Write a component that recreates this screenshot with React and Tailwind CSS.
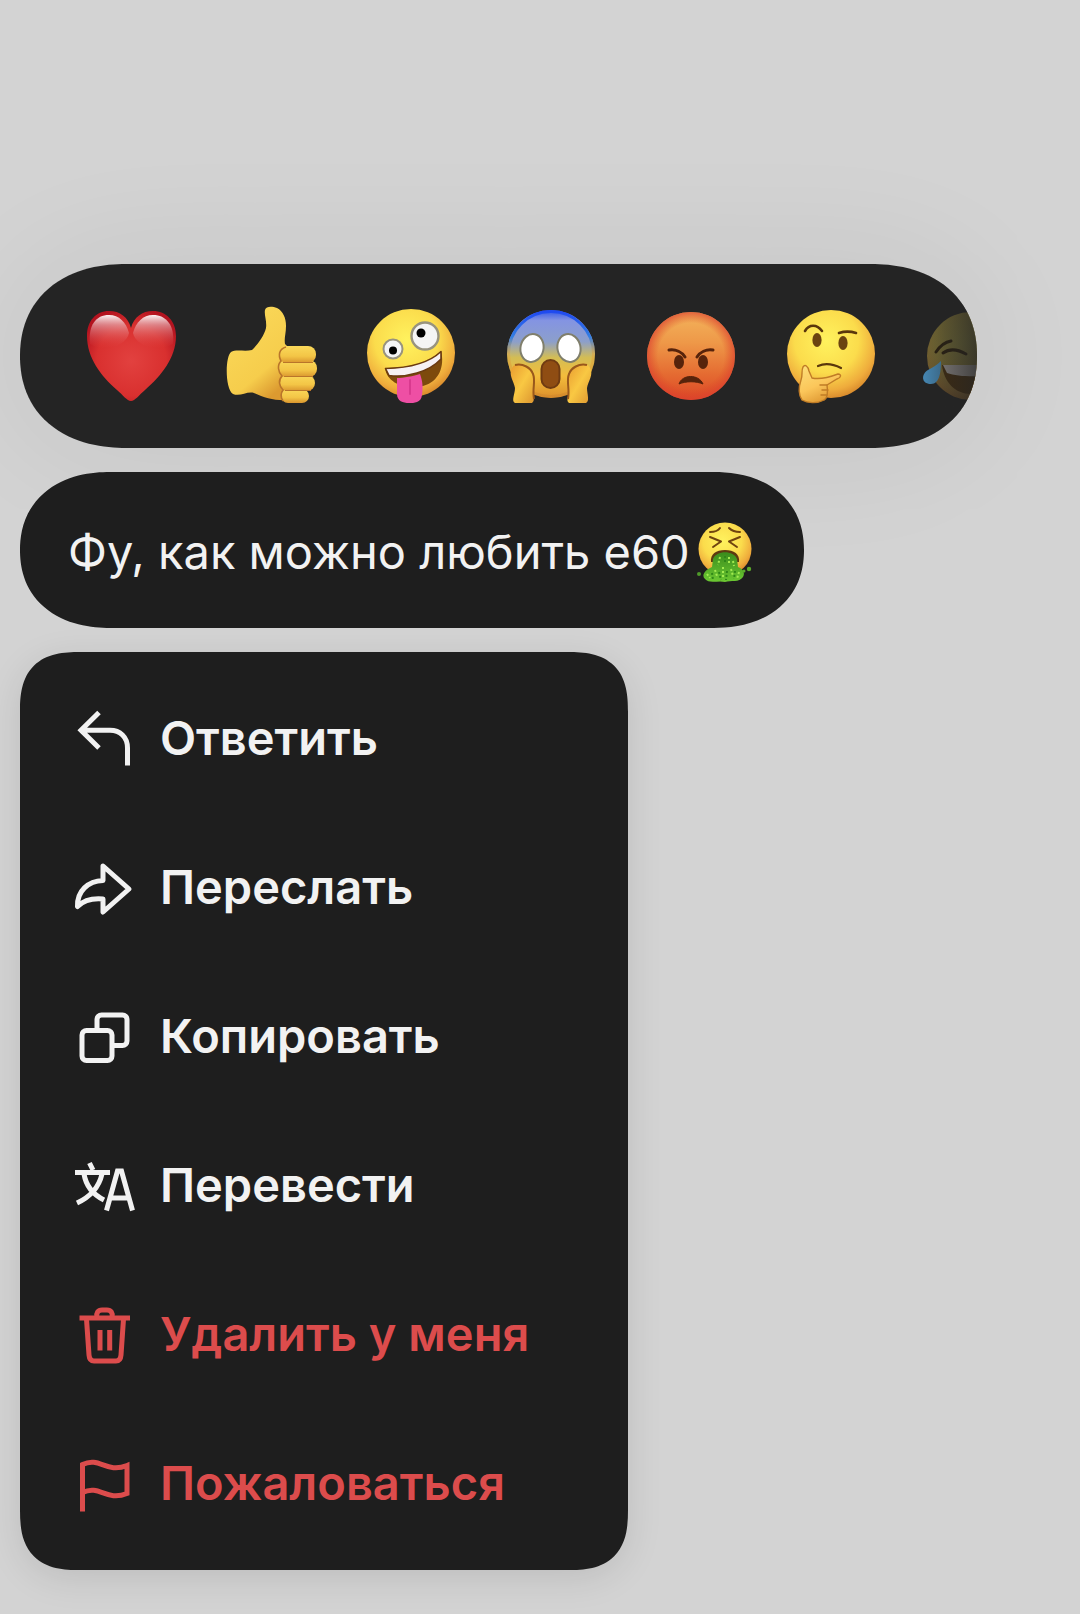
const reactions = [
  { name: "Сердце", Icon: Heart },
  { name: "Нравится", Icon: ThumbsUp },
  { name: "Безумие", Icon: Zany },
  { name: "Ужас", Icon: Scream },
  { name: "Злость", Icon: Angry },
  { name: "Раздумье", Icon: Thinking },
  { name: "Смех", Icon: Joy },
];

const actions = [
  { label: "Ответить", Icon: ReplyIcon },
  { label: "Переслать", Icon: ForwardIcon },
  { label: "Копировать", Icon: CopyIcon },
  { label: "Перевести", Icon: TranslateIcon },
  { label: "Удалить у меня", Icon: TrashIcon, danger: true },
  { label: "Пожаловаться", Icon: FlagIcon, danger: true },
];

export default function App() {
  return (
    <main className="flex min-h-screen flex-col items-start gap-6 bg-[#d3d3d3] px-5 pt-[264px] pb-11 font-['Inter','Noto_Sans',sans-serif]">
      <ReactionBar />

      <p className="flex items-center gap-1.5 rounded-[90px/78px] bg-[#1e1e1e] pt-12 pr-12 pb-11 pl-12 text-[47px] leading-[60px] text-[#f2f2f2] [corner-shape:superellipse(1.15)]">
        Фу, как можно любить е60
        <Vomit />
      </p>

      <menu className="w-full max-w-[608px] rounded-[60px] bg-[#1e1e1e] py-3 shadow-[0_8px_36px_rgba(0,0,0,0.1)] [corner-shape:superellipse(1.4)]">
        {actions.map(({ label, Icon, danger }) => (
          <li key={label} className="list-none">
            <button
              type="button"
              className={`flex h-[149px] w-full items-center gap-6 pl-[52px] text-left text-[47px] font-semibold ${
                danger ? "text-[#dc4c4c]" : "text-[#f2f2f2]"
              }`}>
              <Icon />
              {label}
            </button>
          </li>
        ))}
      </menu>
    </main>
  );
}

function ReactionBar() {
  return (
    <div className="w-full max-w-[957px] rounded-[106px/92px] shadow-[0_0_130px_rgba(0,0,0,0.07)] [corner-shape:superellipse(1.15)]">
      <div className="relative flex overflow-hidden rounded-[106px/92px] bg-[#242424] py-11 pl-[63px] [corner-shape:superellipse(1.15)]">
        {reactions.map(({ name, Icon }) => (
          <button
            key={name}
            type="button"
            aria-label={name}
            className="flex w-[140px] shrink-0">
            <Icon />
          </button>
        ))}
        {/* fade at the scroll edge */}
        <div className="pointer-events-none absolute inset-y-0 right-0 w-16 bg-linear-to-r from-[#242424]/10 via-[#242424]/50 to-[#242424]/80" />
      </div>
    </div>
  );
}

/* ---------- reactions ---------- */

function Emoji({ children }) {
  return (
    <svg viewBox="0 0 96 96" className="size-24 overflow-visible" fill="none" aria-hidden="true">
      {children}
    </svg>
  );
}

// yellow ball shared by most of the faces
function FaceGradient({ id }) {
  return (
    <radialGradient id={id} cx="0.45" cy="0.35" r="0.66">
      <stop offset="0" stopColor="#fff25e" />
      <stop offset="0.55" stopColor="#fbdc4c" />
      <stop offset="0.85" stopColor="#efac3c" />
      <stop offset="1" stopColor="#d98a2c" />
    </radialGradient>
  );
}

function Heart() {
  return (
    <Emoji>
      <defs>
        <radialGradient id="heart" cx="0.5" cy="0.55" r="0.6">
          <stop offset="0" stopColor="#e2413f" />
          <stop offset="0.65" stopColor="#d9302f" />
          <stop offset="1" stopColor="#b3131f" />
        </radialGradient>
        <linearGradient id="heartShine" x1="0" y1="0" x2="0" y2="1">
          <stop offset="0" stopColor="#fff" stopOpacity="0.95" />
          <stop offset="0.3" stopColor="#e9b4b8" stopOpacity="0.65" />
          <stop offset="1" stopColor="#e2413f" stopOpacity="0" />
        </linearGradient>
      </defs>
      <path
        d="M48 93C44 93 40 87 34 82C18 68 4 50 4 28C4 13 13 3 26 3C37 3 45 9 48 20C51 9 59 3 70 3C83 3 93 13 93 28C93 50 78 68 62 82C56 87 52 93 48 93Z"
        fill="url(#heart)"
      />
      <path d="M7 36C5 17 13 7 26 7C36 7 43 14 46 25C44 36 24 46 7 36Z" fill="url(#heartShine)" />
      <path d="M90 36C92 17 83 7 70 7C60 7 53 14 50 25C52 36 72 46 90 36Z" fill="url(#heartShine)" />
    </Emoji>
  );
}

function ThumbsUp() {
  return (
    <Emoji>
      <defs>
        <linearGradient id="thumb" x1="0" y1="0" x2="0.6" y2="1">
          <stop offset="0" stopColor="#fbdb5c" />
          <stop offset="0.75" stopColor="#f6cd4c" />
          <stop offset="1" stopColor="#dc9a30" />
        </linearGradient>
        <linearGradient id="finger" x1="0" y1="0" x2="0" y2="1">
          <stop offset="0" stopColor="#fad95a" />
          <stop offset="0.6" stopColor="#f3c546" />
          <stop offset="1" stopColor="#d9952e" />
        </linearGradient>
      </defs>
      <path
        d="M8 44C13 41 22 44 29 42C35 36 41 28 43 20C44 13 41 7 42 2C43 -2 49 -2 54 0C60 3 63 10 63 18C63 26 61 30 62 36L70 44L66 92C52 93 42 90 31 85C24 83 17 89 10 86C2 81 2 49 8 44Z"
        fill="url(#thumb)"
      />
      <rect x="58" y="81" width="28" height="14" rx="7" fill="url(#finger)" />
      <rect x="57" y="67" width="35" height="16" rx="8" fill="url(#finger)" />
      <rect x="56" y="52" width="38" height="17" rx="8" fill="url(#finger)" />
      <rect x="56" y="38" width="37" height="17" rx="8" fill="url(#finger)" />
      <path
        d="M63 39C56 41 55 47 58 53C54 57 55 64 59 68C55 72 56 78 60 82C57 86 58 90 60 93"
        stroke="#b9752a"
        strokeWidth="1.6"
      />
      <path d="M60 54.500H90M61 68.500H90M62 82.500H88" stroke="#b9752a" strokeWidth="1.2" />
    </Emoji>
  );
}

function Zany() {
  return (
    <Emoji>
      <defs>
        <FaceGradient id="zany" />
      </defs>
      <circle cx="48" cy="45" r="44" fill="url(#zany)" />
      <circle cx="30" cy="41" r="9.500" fill="#f4f4f4" stroke="#98937e" strokeWidth="2" />
      <circle cx="30" cy="42.500" r="4" fill="#000" />
      <circle cx="62" cy="28" r="13.500" fill="#f4f4f4" stroke="#98937e" strokeWidth="2.400" />
      <circle cx="58" cy="25" r="4.500" fill="#000" />
      <path d="M22 60C44 60 65 56 78 43C82 58 76 74 60 78C44 82 24 76 22 60Z" fill="#7d4a0c" />
      <path
        d="M22.500 60.500C44 60 65 56 78 43.500L78 51C66 64 43 70 26 67.500Z"
        fill="#f6f1f3"
        stroke="#6b3a10"
        strokeWidth="1.600"
        strokeLinejoin="round"
      />
      <path
        d="M34 70C40 70 51 68 57 66C60 74 60 80 59 87C58 95 51 95 46 95C40 95 34 93 34 86Z"
        fill="#ee4fa4"
      />
      <path d="M47 72V86" stroke="#d93a8f" strokeWidth="2" strokeLinecap="round" />
    </Emoji>
  );
}

function Scream() {
  return (
    <Emoji>
      <defs>
        <linearGradient id="scream" x1="0" y1="0" x2="0" y2="1">
          <stop offset="0" stopColor="#2e55e8" />
          <stop offset="0.12" stopColor="#8494e2" />
          <stop offset="0.36" stopColor="#8c9fcb" />
          <stop offset="0.54" stopColor="#d3bd55" />
          <stop offset="0.75" stopColor="#f3bd3c" />
          <stop offset="1" stopColor="#dc8f2b" />
        </linearGradient>
        <linearGradient id="screamRim" x1="0" y1="0" x2="0" y2="1">
          <stop offset="0" stopColor="#1f49f0" />
          <stop offset="0.3" stopColor="#347fe2" />
          <stop offset="0.5" stopColor="#e0a33c" stopOpacity="0.5" />
          <stop offset="1" stopColor="#c9802b" stopOpacity="0.4" />
        </linearGradient>
        <linearGradient id="hand" x1="0" y1="0" x2="1" y2="1">
          <stop offset="0" stopColor="#e89a30" />
          <stop offset="0.5" stopColor="#f9c843" />
          <stop offset="1" stopColor="#dc9530" />
        </linearGradient>
      </defs>
      <circle cx="48" cy="46" r="44" fill="url(#scream)" />
      <circle cx="48" cy="46" r="42.500" stroke="url(#screamRim)" strokeWidth="3" />
      <ellipse cx="29" cy="40" rx="11.500" ry="14" transform="rotate(12 29 40)" fill="#fff" stroke="#807f6c" strokeWidth="2" />
      <ellipse cx="66" cy="40" rx="11.500" ry="14" transform="rotate(-12 66 40)" fill="#fff" stroke="#807f6c" strokeWidth="2" />
      <rect x="38.500" y="52" width="18" height="28" rx="9" fill="#8f4d13" stroke="#6f3b12" strokeWidth="2" />
      <path
        d="M9 60C12 54 20 55 26 60C32 65 32 75 30 81C29 87 33 92 29 95H12C8 93 12 86 12 80C11 73 5 67 9 60Z"
        fill="url(#hand)"
      />
      <path
        d="M87 60C84 54 76 55 70 60C64 65 64 75 66 81C67 87 62 92 66 95H83C87 93 84 86 84 80C85 73 91 67 87 60Z"
        fill="url(#hand)"
      />
      <path
        d="M12 57C20 55 28 60 30 66C33 73 29 80 31 91M84 57C76 55 68 60 66 66C63 73 67 80 65 91"
        stroke="#99581c"
        strokeWidth="2"
      />
    </Emoji>
  );
}

function Angry() {
  return (
    <Emoji>
      <defs>
        <linearGradient id="angry" x1="0" y1="0" x2="0" y2="1">
          <stop offset="0" stopColor="#f3b45c" />
          <stop offset="0.35" stopColor="#ee9848" />
          <stop offset="0.7" stopColor="#e56c32" />
          <stop offset="1" stopColor="#dc4726" />
        </linearGradient>
        <radialGradient id="angryRim">
          <stop offset="0.75" stopColor="#dc4726" stopOpacity="0" />
          <stop offset="1" stopColor="#dc4030" stopOpacity="0.7" />
        </radialGradient>
      </defs>
      <circle cx="48" cy="48" r="44" fill="url(#angry)" />
      <circle cx="48" cy="48" r="44" fill="url(#angryRim)" />
      <ellipse cx="36" cy="54" rx="5" ry="7" fill="#57230b" />
      <ellipse cx="60" cy="54" rx="5" ry="7" fill="#57230b" />
      <path
        d="M26 42C33 41 39 44 42 49M70 42C63 41 57 44 54 49"
        stroke="#57230b"
        strokeWidth="3"
        strokeLinecap="round"
      />
      <path d="M36 76C39 66 56 66 60 76C53 73 43 73 36 76Z" fill="#57230b" stroke="#57230b" strokeLinejoin="round" />
    </Emoji>
  );
}

function Thinking() {
  return (
    <Emoji>
      <defs>
        <FaceGradient id="thinking" />
        <linearGradient id="fist" x1="0" y1="0" x2="0.5" y2="1">
          <stop offset="0" stopColor="#fde07a" />
          <stop offset="0.6" stopColor="#fbc65a" />
          <stop offset="1" stopColor="#e09a34" />
        </linearGradient>
      </defs>
      <circle cx="48" cy="46" r="44" fill="url(#thinking)" />
      <ellipse cx="34" cy="32" rx="4.600" ry="7" fill="#6a4310" />
      <ellipse cx="60" cy="35" rx="4.600" ry="7" fill="#6a4310" />
      <path d="M22 23C26 16 34 16 39 23M56 25C62 23 67 23 73 25" stroke="#5a370c" strokeWidth="2.600" strokeLinecap="round" />
      <path d="M35 58C42 55 50 56 58 60" stroke="#5a370c" strokeWidth="2.200" strokeLinecap="round" />
      <path
        d="M20 59C22 56 25 58 26 63L29 70C38 72 47 69 55 66C59 66 58 70 54 71L44 77C45 84 45 90 41 92C34 96 24 95 19 92C15 86 16 78 18 72C20 67 18 63 20 59Z"
        fill="url(#fist)"
        stroke="#c07c26"
        strokeWidth="1.400"
      />
      <path d="M37 77H44M39 82H45M38 87H44" stroke="#c07c26" strokeWidth="1.400" strokeLinecap="round" />
    </Emoji>
  );
}

function Joy() {
  return (
    <Emoji>
      <defs>
        <FaceGradient id="joy" />
      </defs>
      <circle cx="48" cy="48" r="44" fill="url(#joy)" opacity="0.5" />
      <path
        d="M13 44C17 38 22 34 28 33M20 45C27 40 36 42 43 46"
        stroke="#2b1d08"
        strokeWidth="3"
        strokeLinecap="round"
      />
      <path d="M19 57H78C76 76 64 86 48 86C32 86 21 74 19 57Z" fill="#4d3009" />
      <path d="M20 57H76L72 67C55 69 35 69 24 65Z" fill="#b9b3b0" />
      <path d="M18 53C18 63 17 76 8 76C-2 76 -2 66 5 62C10 59 14 57 18 53Z" fill="#4fa3dc" />
    </Emoji>
  );
}

function Vomit() {
  return (
    <svg viewBox="0 0 60 64" className="h-16 w-[60px]" fill="none" role="img" aria-label="Тошнит">
      <defs>
        <FaceGradient id="vomitFace" />
        <linearGradient id="vomitFlow" x1="0" y1="0" x2="0" y2="1">
          <stop offset="0" stopColor="#3a8c1c" />
          <stop offset="1" stopColor="#6cc832" />
        </linearGradient>
      </defs>
      <circle cx="29" cy="29" r="26.500" fill="url(#vomitFace)" />
      <path
        d="M14 12C18 12 22 11 24 8M44 12C40 12 36 11 33 8M14 17L25 21.500L17 27M44 17L33 21.500L41 27"
        stroke="#70440f"
        strokeWidth="2"
        strokeLinecap="round"
        strokeLinejoin="round"
      />
      <path d="M15 42C14 34 20 30 29 30C38 30 44 34 43 42Z" fill="#5e3a10" />
      <path
        d="M17 39C20 30 38 30 41 39L42 47C48 49 49 54 47 57C43 63 35 60 29 62C23 60 13 64 9 59C5 55 9 50 16 47Z"
        fill="url(#vomitFlow)"
      />
      <path
        d="M11 54L14 58M19 50L21 56M27 47V57M35 49L37 56M43 52L41 59M24 37L22 45M33 37V43M37 41L38 46"
        stroke="#a2ea50"
        strokeWidth="2"
        strokeDasharray="2 2"
      />
      <path
        d="M16 53L17 60M23 52L25 60M31 51L30 60M39 51L38 59M29 36V44"
        stroke="#2f8718"
        strokeWidth="2"
        strokeDasharray="2 2"
      />
      <circle cx="3" cy="54" r="2" fill="#4f9a2a" />
      <circle cx="53" cy="49" r="2.200" fill="#5cab2c" />
      <circle cx="48" cy="51" r="1.500" fill="#5cab2c" />
    </svg>
  );
}

/* ---------- menu icons ---------- */

function MenuIcon({ children }) {
  return (
    <svg
      viewBox="0 0 64 64"
      className="size-16 shrink-0"
      fill="none"
      stroke="currentColor"
      strokeWidth="5"
      aria-hidden="true">
      {children}
    </svg>
  );
}

function ReplyIcon() {
  return (
    <MenuIcon>
      <path d="M27 5.500L9 23.300L27 41M9 23.300H38C48 23.300 55.500 30 55.500 41V58.500" />
    </MenuIcon>
  );
}

function ForwardIcon() {
  return (
    <MenuIcon>
      <path d="M31 10L57 33L31 56V43C20 42 12 44 5.500 50.500C5 35 16 25 31 24.500Z" strokeLinejoin="round" />
    </MenuIcon>
  );
}

function CopyIcon() {
  return (
    <MenuIcon>
      <rect x="10" y="25.500" width="30" height="30" rx="4.500" />
      <path d="M25 25V14.500a4.500 4.500 0 0 1 4.500-4.500H50.500a4.500 4.500 0 0 1 4.500 4.500V36a4.500 4.500 0 0 1-4.500 4.500H41" />
    </MenuIcon>
  );
}

function TranslateIcon() {
  return (
    <MenuIcon>
      <path d="M17.500 9L21 16M3 18.500H38M12 20C14 32 22 41 32 46M30 20C27 33 18 43 5 49" />
      <path d="M34.500 56.500L45.500 17H49.500L60.500 56.500M38 44H57" />
    </MenuIcon>
  );
}

function TrashIcon() {
  return (
    <MenuIcon>
      <path d="M7.500 15H58M25 14C24 10 26 7 30 7H35C39 7 41 10 40 14" />
      <path d="M14.500 16L17 52C17.300 56 19 58 22 58H44C47 58 48.700 56 49 52L51.500 16" />
      <path d="M28 27V47.500M37.700 27V47.500" />
    </MenuIcon>
  );
}

function FlagIcon() {
  return (
    <MenuIcon>
      <path d="M10.500 59.500V12.500C28 4 34 22 55 13.500V41.500C34 50 28 32 10.500 40.500" />
    </MenuIcon>
  );
}
